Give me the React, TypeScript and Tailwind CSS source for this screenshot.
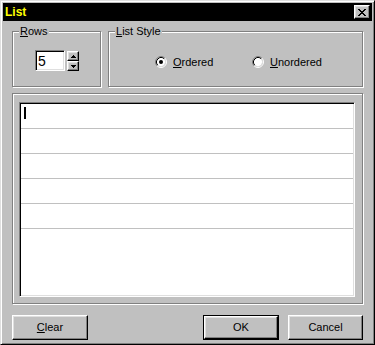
const font = { fontFamily: '"Liberation Sans", Arial, sans-serif' };

const raised =
  "bg-[#c0c0c0] border border-t-white border-l-white border-b-black border-r-black shadow-[inset_-1px_-1px_0_#808080,inset_1px_1px_0_#dfdfdf]";
const sunken =
  "border border-t-[#808080] border-l-[#808080] border-b-white border-r-white shadow-[inset_1px_1px_0_#000,inset_-1px_-1px_0_#dfdfdf]";
const etched = "border border-[#808080] shadow-[inset_1px_1px_0_#fff,1px_1px_0_#fff]";

function CloseGlyph() {
  const rows = ["11000011", "01100110", "00111100", "00011000", "00111100", "01100110", "11000011"];
  return (
    <svg width="8" height="7" viewBox="0 0 8 7" shapeRendering="crispEdges">
      {rows.map((r, y) =>
        r.split("").map((c, x) => (c === "1" ? <rect key={`${x}-${y}`} x={x} y={y} width="1" height="1" fill="#000" /> : null))
      )}
    </svg>
  );
}

function Radio({ checked }: { checked?: boolean }) {
  return (
    <svg width="12" height="12" viewBox="0 0 12 12" className="shrink-0">
      <circle cx="6" cy="6" r="4.2" fill="#fff" />
      <path d="M2.11 9.89 A5.5 5.5 0 0 1 9.89 2.11" stroke="#808080" fill="none" />
      <path d="M9.89 2.11 A5.5 5.5 0 0 1 2.11 9.89" stroke="#fff" fill="none" />
      <path d="M2.82 9.18 A4.5 4.5 0 0 1 9.18 2.82" stroke="#000" fill="none" />
      <path d="M9.18 2.82 A4.5 4.5 0 0 1 2.82 9.18" stroke="#dfdfdf" fill="none" />
      {checked && <circle cx="6" cy="6" r="2" fill="#000" />}
    </svg>
  );
}

function SpinButton({ up }: { up?: boolean }) {
  return (
    <div className={`${raised} w-[12px] h-[10px] flex items-center justify-center`}>
      <svg width="5" height="3" viewBox="0 0 5 3" shapeRendering="crispEdges">
        {up ? <path d="M2 0h1v1h1v1h1v1H0V2h1V1h1z" fill="#000" /> : <path d="M0 0h5v1H4v1H3v1H2V2H1V1H0z" fill="#000" />}
      </svg>
    </div>
  );
}

function Group({ label, className, children }: { label: React.ReactNode; className?: string; children: React.ReactNode }) {
  return (
    <div className={`relative ${etched} ${className ?? ""}`}>
      <div className="absolute left-[6px] top-[-7px] px-[1px] bg-[#c0c0c0] leading-[13px]">{label}</div>
      {children}
    </div>
  );
}

export default function App() {
  return (
    <div
      style={font}
      className="w-[375px] h-[345px] bg-[#c0c0c0] border border-t-[#dfdfdf] border-l-[#dfdfdf] border-b-black border-r-black shadow-[inset_1px_1px_0_#fff,inset_-1px_-1px_0_#808080] p-[2px] text-[11px] text-black flex flex-col"
    >
      {/* Title bar */}
      <div className="h-[18px] bg-black flex items-center justify-between pl-[2px] pr-[2px]">
        <span className="text-[#ffff00] font-bold text-[12px] leading-none">List</span>
        <div className={`${raised} w-[16px] h-[14px] flex items-center justify-center`}>
          <CloseGlyph />
        </div>
      </div>

      <div className="px-[9px] pt-[10px] flex flex-col">
        {/* Top group boxes */}
        <div className="flex gap-[7px] h-[56px]">
          <Group
            className="w-[89px]"
            label={
              <span>
                <span className="underline">R</span>ows
              </span>
            }
          >
            <div className="flex items-start gap-[2px] pl-[22px] pt-[18px]">
              <div className={`${sunken} w-[30px] h-[21px] bg-white flex items-center pl-[2px] text-[14px] leading-none`}>5</div>
              <div className="flex flex-col pt-[1px]">
                <SpinButton up />
                <SpinButton />
              </div>
            </div>
          </Group>
          <Group
            className="flex-1"
            label={
              <span>
                <span className="underline">L</span>ist Style
              </span>
            }
          >
            <div className="flex items-center pl-[46px] pt-[22px]">
              <div className="w-[97px] flex items-center gap-[6px]">
                <Radio checked />
                <span>
                  <span className="underline">O</span>rdered
                </span>
              </div>
              <div className="flex items-center gap-[6px]">
                <Radio />
                <span>
                  <span className="underline">U</span>nordered
                </span>
              </div>
            </div>
          </Group>
        </div>

        {/* List area */}
        <div className={`${etched} mt-[6px] h-[211px] pt-[8px] pl-[6px] pr-[7px] pb-[6px] flex`}>
          <div className={`${sunken} flex-1 bg-white p-[1px]`}>
            {[0, 1, 2, 3, 4].map((i) => (
              <div key={i} className="h-[25px] border-b border-[#c0c0c0] flex items-start">
                {i === 0 && <div className="w-[2px] h-[12px] bg-black ml-[3px] mt-[3px]" />}
              </div>
            ))}
          </div>
        </div>

        {/* Buttons */}
        <div className="mt-[11px] flex items-center">
          <button className={`${raised} w-[76px] h-[25px] flex items-center justify-center`}>
            <span>
              <span className="underline">C</span>lear
            </span>
          </button>
          <div className="flex-1" />
          <div className="border border-black">
            <button className={`${raised} w-[74px] h-[23px] flex items-center justify-center`}>OK</button>
          </div>
          <button className={`${raised} ml-[9px] w-[75px] h-[25px] flex items-center justify-center`}>Cancel</button>
        </div>
      </div>
    </div>
  );
}
